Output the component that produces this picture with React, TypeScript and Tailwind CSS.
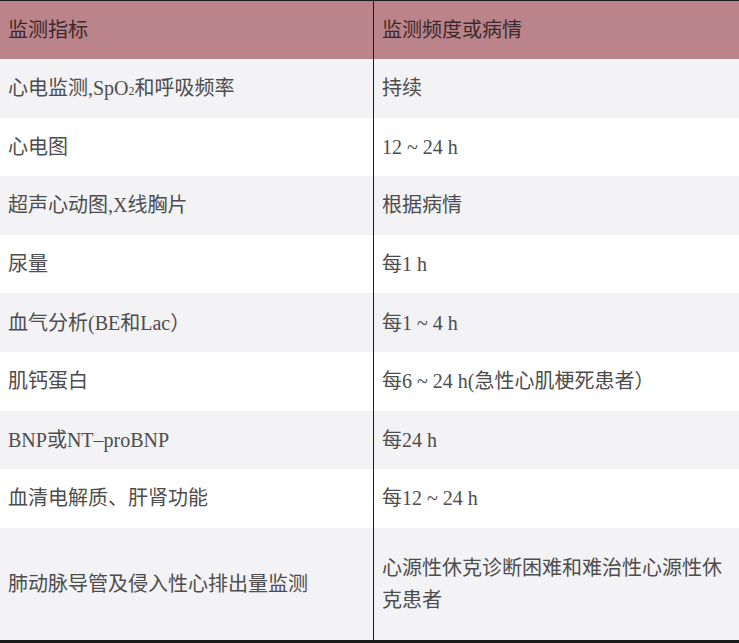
const rows: { left: React.ReactNode; right: React.ReactNode }[] = [
  {
    left: (
      <>
        心电监测,SpO<sub className="text-[12px] align-baseline relative top-[3px]">2</sub>和呼吸频率
      </>
    ),
    right: '持续',
  },
  { left: '心电图', right: '12 ~ 24 h' },
  { left: '超声心动图,X线胸片', right: '根据病情' },
  { left: '尿量', right: '每1 h' },
  { left: '血气分析(BE和Lac）', right: '每1 ~ 4 h' },
  { left: '肌钙蛋白', right: '每6 ~ 24 h(急性心肌梗死患者）' },
  { left: 'BNP或NT–proBNP', right: '每24 h' },
  { left: '血清电解质、肝肾功能', right: '每12 ~ 24 h' },
];

export default function App() {
  return (
    <div
      className="w-[739px] h-[643px] bg-white text-[20px] text-[#4d4d4d] border-t border-b-[3px] border-[#1a1a1a] flex flex-col"
      style={{ fontFamily: '"Liberation Serif", "Noto Sans CJK SC", serif' }}
    >
      <div className="flex h-[58px] bg-[#bb838a] text-[#3a2a2d]">
        <div className="w-[374px] border-r border-[#1a1a1a] flex items-center pl-2">监测指标</div>
        <div className="flex-1 flex items-center pl-2">监测频度或病情</div>
      </div>
      {rows.map((r, i) => (
        <div key={i} className={`flex h-[58.6px] ${i % 2 === 0 ? 'bg-[#f3f2f5]' : 'bg-white'}`}>
          <div className="w-[374px] border-r border-[#1a1a1a] flex items-center pl-2">{r.left}</div>
          <div className="flex-1 flex items-center pl-2">{r.right}</div>
        </div>
      ))}
      <div className="flex flex-1 bg-[#f3f2f5]">
        <div className="w-[374px] border-r border-[#1a1a1a] flex items-center pl-2">肺动脉导管及侵入性心排出量监测</div>
        <div className="flex-1 flex items-center pl-2 pr-1 leading-[32px]">心源性休克诊断困难和难治性心源性休克患者</div>
      </div>
    </div>
  );
}
